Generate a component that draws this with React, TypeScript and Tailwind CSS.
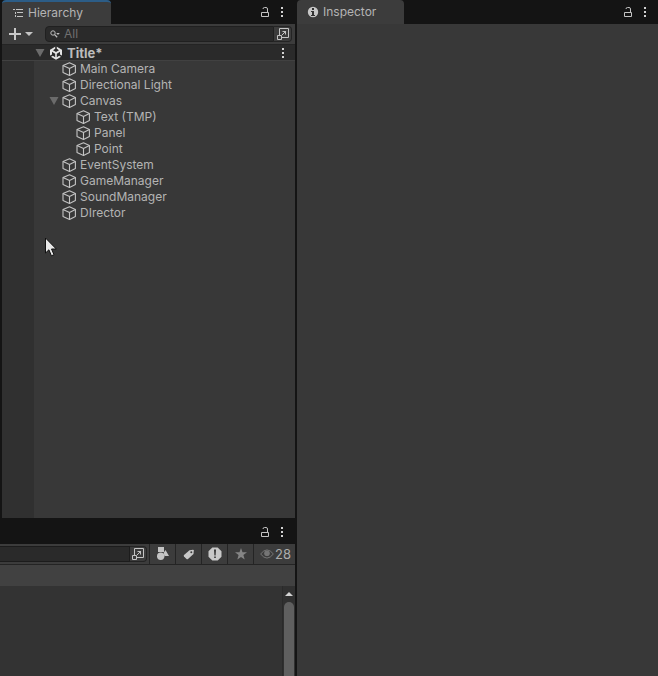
import { useState } from 'react';
import type { ReactNode } from 'react';

interface SceneNode {
  name: string;
  children?: SceneNode[];
}

const sceneObjects: SceneNode[] = [
  { name: 'Main Camera' },
  { name: 'Directional Light' },
  {
    name: 'Canvas',
    children: [{ name: 'Text (TMP)' }, { name: 'Panel' }, { name: 'Point' }],
  },
  { name: 'EventSystem' },
  { name: 'GameManager' },
  { name: 'SoundManager' },
  { name: 'DIrector' },
];

/* Icons */
function LockIcon() {
  return (
    <svg width="10" height="12" viewBox="0 0 10 12" fill="none" stroke="#c4c4c4">
      <path d="M1.500 6.500h7v4h-7z" />
      <path d="M7.500 6V3Q7.500 1.500 6 1.500H4.500Q3 1.500 3 3" />
    </svg>
  );
}

function DotsIcon() {
  return (
    <svg width="4" height="12" viewBox="0 0 4 12" fill="#d2d2d2">
      <path d="M1 1h2v2H1zM1 5h2v2H1zM1 9h2v2H1z" />
    </svg>
  );
}

function HierarchyIcon() {
  return (
    <svg width="11" height="10" viewBox="0 0 11 10" fill="#c4c4c4">
      <path d="M0 1h2v1H0zM3 1h7v1H3zM2 4h1v2H2zM4 4h6v1H4zM2 7h1v2H2zM4 8h6v1H4z" />
    </svg>
  );
}

function InfoIcon() {
  return (
    <svg width="12" height="12" viewBox="0 0 12 12">
      <circle cx="6" cy="6" r="5.200" fill="#c8c8c8" />
      <path d="M5 2h2v2H5zM4 5h3v4h1v1H4V9h1V6H4z" fill="#333" />
    </svg>
  );
}

function CubeIcon() {
  return (
    <svg
      width="14"
      height="14"
      viewBox="0 0 14 14"
      fill="none"
      stroke="#c4c4c4"
      strokeWidth="1.100"
      strokeLinejoin="round"
    >
      <path d="M7.500 .8 13.400 3.500v7L7.500 13.400 1 10.500v-7z" />
      <path d="M1 3.500 7.500 6.500l5.900-3M7.500 6.500v7" />
    </svg>
  );
}

function SceneIcon() {
  return (
    <svg width="14" height="14" viewBox="0 0 14 14">
      <path d="M7 .3 13 3.700v6.600L7 13.700 1 10.300V3.700z" fill="#e4e4e4" />
      <path d="M6.200 0h1.600v2.800L10 4.200 7 6 4 4.200l2.200-1.400z" fill="#2a2a2a" />
      <path d="M3 5.800 6.200 7.700v3.500L3.800 9.800 1 11.400.3 10l2.700-1.600z" fill="#2a2a2a" />
      <path d="M11 5.800 7.800 7.700v3.500l2.400-1.400 2.800 1.600.7-1.400L11 8.400z" fill="#2a2a2a" />
    </svg>
  );
}

function SearchIcon() {
  return (
    <svg width="10" height="8" viewBox="0 0 10 8" fill="none" stroke="#bdbdbd">
      <circle cx="3" cy="3" r="2.200" />
      <path d="m4.600 4.600 2.600 2.600" strokeWidth="1.300" />
      <path d="M6.200 3h3.600L8 5z" fill="#bdbdbd" stroke="none" />
    </svg>
  );
}

function OpenSearchIcon() {
  return (
    <svg width="12" height="12" viewBox="0 0 12 12" fill="none" stroke="#c4c4c4">
      <path d="M2.500 7V.5h9v9H5" />
      <path d="M.5 7.500h4v4h-4z" />
      <path d="M5 7l4-4M5.500 3.500h3v3" />
    </svg>
  );
}

function ShapesIcon() {
  return (
    <svg width="12" height="14" viewBox="0 0 12 14" fill="#c4c4c4">
      <path d="M1 0h6v5H1zM8.500 3 12 9H7.500L6.500 6z" />
      <circle cx="3.700" cy="9.300" r="3.700" />
    </svg>
  );
}

function TagIcon() {
  return (
    <svg width="12" height="11" viewBox="0 0 12 11">
      <path
        d="M6.500 1.200 10 .8q.8 0 .8.800L10.500 5 5 10q-.8.600-1.500 0L1 7.500Q.4 6.800 1 6z"
        fill="#c8c8c8"
      />
      <circle cx="8.300" cy="3.300" r="1" fill="#3c3c3c" />
    </svg>
  );
}

function AlertIcon() {
  return (
    <svg width="14" height="14" viewBox="0 0 14 14">
      <path d="M4.300.5h5.400l3.800 3.800v5.400l-3.800 3.800H4.300L.5 9.700V4.300z" fill="#c8c8c8" />
      <path d="M6 2.500h2L7.600 8.500H6.400zM6.200 9.500h1.600V11H6.200z" fill="#333" />
    </svg>
  );
}

function StarIcon() {
  return (
    <svg width="12" height="12" viewBox="0 0 12 12" fill="#858585">
      <path d="M6 0l1.500 4.200 4.500.1-3.600 2.800 1.300 4.400L6 8.900l-3.700 2.600 1.300-4.400L0 4.300l4.500-.1z" />
    </svg>
  );
}

function EyeIcon() {
  return (
    <svg width="14" height="10" viewBox="0 0 14 10">
      <path d="M.6 5Q7-3.200 13.400 5 7 13.200.6 5z" fill="none" stroke="#757575" />
      <circle cx="7" cy="4.300" r="2.800" fill="#757575" />
    </svg>
  );
}

function FoldArrow({ open }: { open: boolean }) {
  return (
    <svg width="10" height="8" viewBox="0 0 10 8" fill="#6b6b6b" className={open ? '' : '-rotate-90'}>
      <path d="M.5 0h9L5 8z" />
    </svg>
  );
}

/* Lock and menu buttons at the right end of a tab bar */
function PanelActions() {
  return (
    <div className="ml-auto flex items-center gap-[10px] pr-[11px]">
      <button aria-label="Lock">
        <LockIcon />
      </button>
      <button aria-label="Menu">
        <DotsIcon />
      </button>
    </div>
  );
}

function TreeRow({ node }: { node: SceneNode }) {
  const [open, setOpen] = useState(true);

  return (
    <li>
      <div className="flex h-4 items-center">
        {node.children ? (
          <button
            className="mr-[3px] w-[10px]"
            aria-label={`Toggle ${node.name}`}
            onClick={() => setOpen(!open)}
          >
            <FoldArrow open={open} />
          </button>
        ) : (
          <span className="mr-[3px] w-[10px]" />
        )}
        <CubeIcon />
        <span className="ml-[4px]">{node.name}</span>
      </div>
      {node.children && open && (
        <ul className="pl-[14px]">
          {node.children.map((child) => (
            <TreeRow key={child.name} node={child} />
          ))}
        </ul>
      )}
    </li>
  );
}

function HierarchyPanel() {
  const [open, setOpen] = useState(true);

  return (
    <section className="relative flex flex-1 flex-col pl-0.5">
      <header className="flex h-6 items-stretch">
        <div className="flex items-center gap-1 rounded-t-sm border-t-2 border-[#2c5d87] bg-[#3c3c3c] pr-7 pl-[11px]">
          <HierarchyIcon />
          <h2>Hierarchy</h2>
        </div>
        <PanelActions />
      </header>

      {/* Toolbar */}
      <div className="flex h-5 items-center bg-[#3c3c3c] pr-[3px]">
        <button className="flex items-center gap-1 pl-[7px]" aria-label="Create">
          <svg width="12" height="12" viewBox="0 0 12 12" fill="#c8c8c8">
            <path d="M5 0h2v5h5v2H7v5H5V7H0V5h5z" />
          </svg>
          <svg width="8" height="4" viewBox="0 0 8 4" fill="#c4c4c4">
            <path d="M0 0h8L4 4z" />
          </svg>
        </button>
        <label className="ml-3 flex h-4 flex-1 items-center gap-1 rounded-l border border-[#202020] bg-[#2a2a2a] pl-1">
          <SearchIcon />
          <input
            className="w-full min-w-0 flex-1 bg-transparent outline-none placeholder:text-[#707070]"
            placeholder="All"
            aria-label="Search hierarchy"
          />
        </label>
        <button
          className="flex h-4 w-[18px] items-center justify-center rounded-r border border-l-0 border-[#242424]"
          aria-label="Open in search"
        >
          <OpenSearchIcon />
        </button>
      </div>

      {/* Scene header */}
      <div className="flex h-[17px] items-center border-t border-b border-t-[#242424] border-b-[#414141] bg-[#2a2a2a] pr-[10px] pl-[33px]">
        <button className="mr-1" aria-label="Toggle scene" onClick={() => setOpen(!open)}>
          <FoldArrow open={open} />
        </button>
        <SceneIcon />
        <h3 className="ml-1 text-[13px] font-bold text-[#bcbcbc]">Title*</h3>
        <button className="ml-auto" aria-label="Scene menu">
          <DotsIcon />
        </button>
      </div>

      <div className="flex flex-1 bg-[#383838]">
        <div className="w-8 shrink-0 bg-[#303030]" />
        {open && (
          <ul className="pl-[15px]">
            {sceneObjects.map((node) => (
              <TreeRow key={node.name} node={node} />
            ))}
          </ul>
        )}
      </div>

      {/* Pointer */}
      <svg className="absolute top-[237px] left-[45px]" width="12" height="20" viewBox="0 0 12 20">
        <path
          d="M.5 1v15l3.400-3.200 2.500 6 2.600-1.100-2.500-5.700h4.800z"
          fill="#e8e8e8"
          stroke="#111"
        />
      </svg>
    </section>
  );
}

function FilterButton({ label, children }: { label: string; children: ReactNode }) {
  return (
    <button
      aria-label={label}
      className="flex w-[26px] items-center justify-center border-l border-[#242424]"
    >
      {children}
    </button>
  );
}

function ProjectPanel() {
  return (
    <section className="flex flex-col">
      <header className="flex h-[26px] items-stretch pt-0.5">
        <PanelActions />
      </header>

      <div className="flex h-[21px] items-stretch border-b border-[#242424] bg-[#3c3c3c]">
        <div className="flex flex-1 items-center pr-[2px]">
          <input
            className="h-4 w-full min-w-0 flex-1 border-y border-r border-[#1c1c1c] bg-[#2a2a2a] px-1 outline-none"
            aria-label="Search project"
          />
          <button
            className="flex h-4 w-[17px] items-center justify-center rounded-r border border-l-0 border-[#242424]"
            aria-label="Open in search"
          >
            <OpenSearchIcon />
          </button>
        </div>
        <FilterButton label="Search by type">
          <ShapesIcon />
        </FilterButton>
        <FilterButton label="Search by label">
          <TagIcon />
        </FilterButton>
        <FilterButton label="Search by log">
          <AlertIcon />
        </FilterButton>
        <FilterButton label="Favorites">
          <StarIcon />
        </FilterButton>
        <button className="flex w-[42px] items-center gap-px border-l border-[#242424] pl-[6px] text-[13px] text-[#acacac]">
          <EyeIcon />
          28
        </button>
      </div>

      <div className="h-[21px] bg-[#414141]" />

      <div className="flex h-[90px] bg-[#333333]">
        <div className="ml-auto flex w-[13px] flex-col items-center border-l border-[#2a2a2a] bg-[#303030]">
          <button className="flex h-4 shrink-0 items-center" aria-label="Scroll up">
            <svg width="8" height="4" viewBox="0 0 8 4" fill="#d2d2d2">
              <path d="M0 4h8L4 0z" />
            </svg>
          </button>
          <div className="w-[10px] flex-1 rounded-t-full bg-[#5f5f5f]" />
        </div>
      </div>
    </section>
  );
}

function InspectorPanel() {
  return (
    <section className="flex flex-1 flex-col">
      <header className="flex h-6 items-stretch">
        <div className="flex items-center gap-1 rounded-t bg-[#3c3c3c] pr-7 pl-[10px]">
          <InfoIcon />
          <h2>Inspector</h2>
        </div>
        <PanelActions />
      </header>
      <div className="flex-1 bg-[#383838]" />
    </section>
  );
}

export default function App() {
  return (
    <main className="flex min-h-screen gap-0.5 bg-[#141414] font-['Inter',sans-serif] text-[12px] leading-4 text-[#b4b4b4]">
      <div className="flex w-[295px] shrink-0 flex-col">
        <HierarchyPanel />
        <ProjectPanel />
      </div>
      <InspectorPanel />
    </main>
  );
}
